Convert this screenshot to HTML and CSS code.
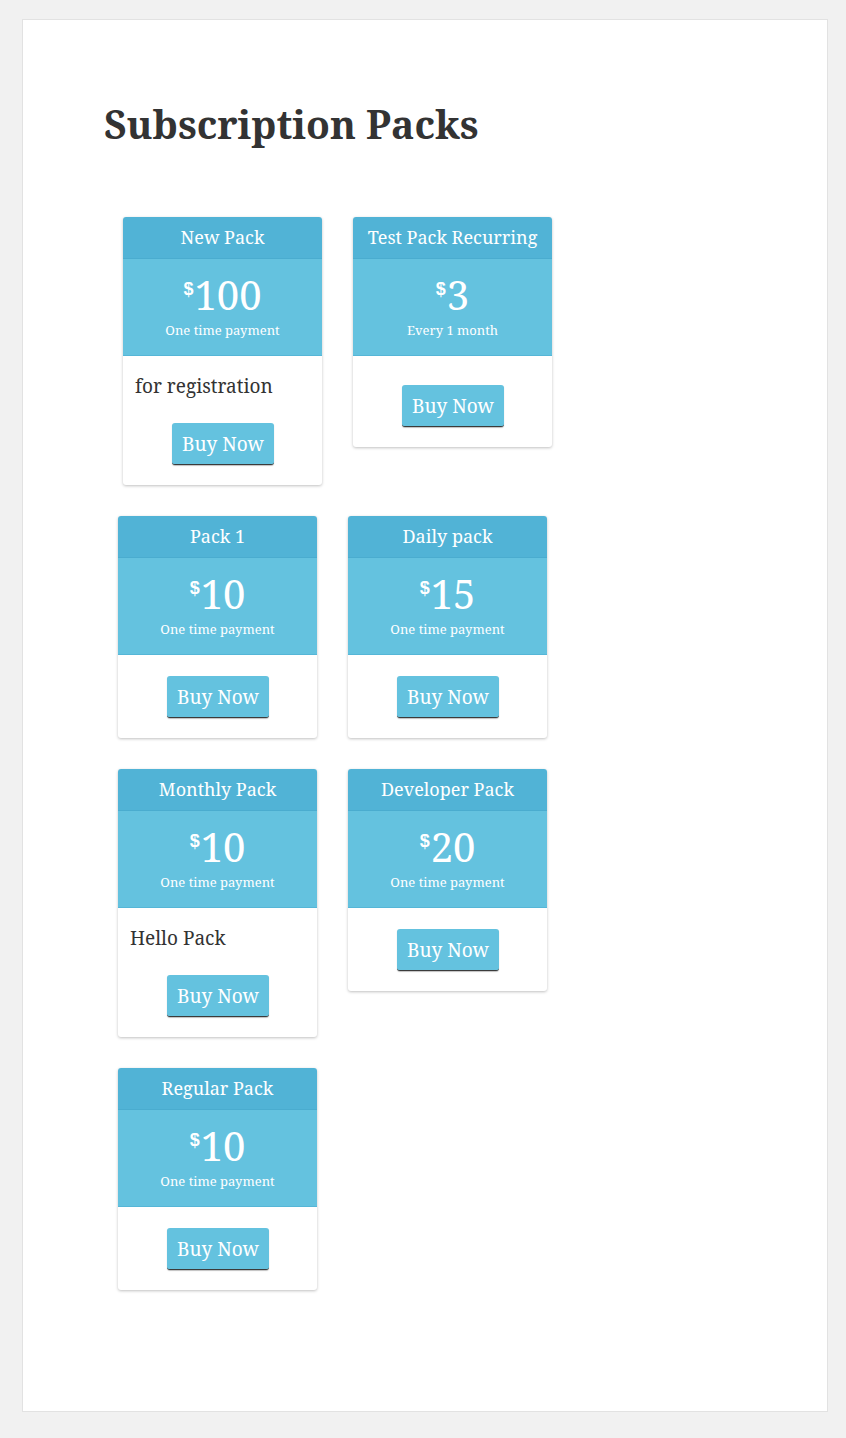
FILE: index.html
```html
<!DOCTYPE html>
<html lang="en">
<head>
    <meta charset="UTF-8">
    <meta name="viewport" content="width=device-width, initial-scale=1.0">
    <title>Subscription Packs</title>
    <link rel="stylesheet" href="styles.css">
</head>

<body>

<div class="page">
    <h1 class="page-title">Subscription Packs</h1>

    <section class="pack-list pack-list-first">
        <div class="pack">
            <div class="pack-name">New Pack</div>
            <div class="pack-price">
                <div class="amount"><sup>$</sup>100</div>
                <div class="cycle">One time payment</div>
            </div>
            <div class="pack-body">
                <p class="pack-desc">for registration</p>
                <div class="pack-action"><button>Buy Now</button></div>
            </div>
        </div>
        <div class="pack">
            <div class="pack-name">Test Pack Recurring</div>
            <div class="pack-price">
                <div class="amount"><sup>$</sup>3</div>
                <div class="cycle">Every 1 month</div>
            </div>
            <div class="pack-body pack-body-spaced">
                <div class="pack-action"><button>Buy Now</button></div>
            </div>
        </div>
    </section>

    <section class="pack-list">
        <div class="pack">
            <div class="pack-name">Pack 1</div>
            <div class="pack-price">
                <div class="amount"><sup>$</sup>10</div>
                <div class="cycle">One time payment</div>
            </div>
            <div class="pack-body">
                <div class="pack-action"><button>Buy Now</button></div>
            </div>
        </div>
        <div class="pack">
            <div class="pack-name">Daily pack</div>
            <div class="pack-price">
                <div class="amount"><sup>$</sup>15</div>
                <div class="cycle">One time payment</div>
            </div>
            <div class="pack-body">
                <div class="pack-action"><button>Buy Now</button></div>
            </div>
        </div>
        <div class="pack">
            <div class="pack-name">Monthly Pack</div>
            <div class="pack-price">
                <div class="amount"><sup>$</sup>10</div>
                <div class="cycle">One time payment</div>
            </div>
            <div class="pack-body">
                <p class="pack-desc">Hello Pack</p>
                <div class="pack-action"><button>Buy Now</button></div>
            </div>
        </div>
        <div class="pack">
            <div class="pack-name">Developer Pack</div>
            <div class="pack-price">
                <div class="amount"><sup>$</sup>20</div>
                <div class="cycle">One time payment</div>
            </div>
            <div class="pack-body">
                <div class="pack-action"><button>Buy Now</button></div>
            </div>
        </div>
        <div class="pack">
            <div class="pack-name">Regular Pack</div>
            <div class="pack-price">
                <div class="amount"><sup>$</sup>10</div>
                <div class="cycle">One time payment</div>
            </div>
            <div class="pack-body">
                <div class="pack-action"><button>Buy Now</button></div>
            </div>
        </div>
    </section>
</div>

</body>
</html>
```

FILE: styles.css
```css
/* General Styles */
body {
    font-family: "Noto Serif", "DejaVu Serif", serif;
    margin: 0;
    padding: 19px 18px 26px 22px;
    background-color: #f1f1f1;
    color: #333;
}

.page {
    background-color: #fff;
    border: 1px solid #e2e2e2;
    min-height: 1391px;
    padding: 0 0 0 81px;
}

.page-title {
    margin: 0;
    padding-top: 79px;
    font-size: 39px;
    line-height: 50px;
    font-weight: bold;
    color: #333;
}

.pack-list {
    display: grid;
    grid-template-columns: 199px 199px;
    column-gap: 31px;
    row-gap: 31px;
    align-items: start;
    margin-left: 14px;
}

.pack-list-first {
    margin: 68px 0 31px 19px;
}

.pack {
    background-color: #fff;
    border-radius: 3px;
    box-shadow: 0 1px 3px rgba(0, 0, 0, 0.25);
    overflow: hidden;
}

.pack-name {
    background-color: #51b3d6;
    border-bottom: 1px solid #4aaccf;
    color: #fff;
    text-align: center;
    font-size: 18px;
    line-height: 41px;
}

.pack-price {
    background-color: #64c2df;
    border-bottom: 1px solid #55b6d7;
    color: #fff;
    text-align: center;
    height: 97px;
    box-sizing: border-box;
    padding-top: 14px;
}

.pack-price .amount {
    font-size: 40px;
    line-height: 44px;
}

.pack-price sup {
    font-family: "Liberation Sans", Arial, sans-serif;
    font-size: 18px;
    font-weight: bold;
    line-height: 20px;
    vertical-align: top;
    position: relative;
    top: 6px;
    margin-right: 1px;
}

.pack-price .cycle {
    font-size: 13px;
    line-height: 18px;
    margin-top: 4px;
}

.pack-body {
    padding: 10px 11px 20px 12px;
}

.pack-body-spaced {
    padding-top: 18px;
}

.pack-desc {
    margin: 7px 0 23px;
    font-size: 19px;
    line-height: 27px;
    color: #333;
}

.pack-action {
    margin-top: 11px;
    text-align: center;
}

.pack-desc + .pack-action {
    margin-top: 0;
}

.pack-action button {
    font-family: inherit;
    font-size: 19px;
    color: #fff;
    background-color: #64c2df;
    border: none;
    border-bottom: 1px solid #3b3b3b;
    border-radius: 3px;
    box-shadow: 0 1px 1px rgba(0, 0, 0, 0.25);
    width: 102px;
    height: 42px;
    padding: 0;
    cursor: pointer;
}

.pack-action button:hover {
    background-color: #51b3d6;
}
```
